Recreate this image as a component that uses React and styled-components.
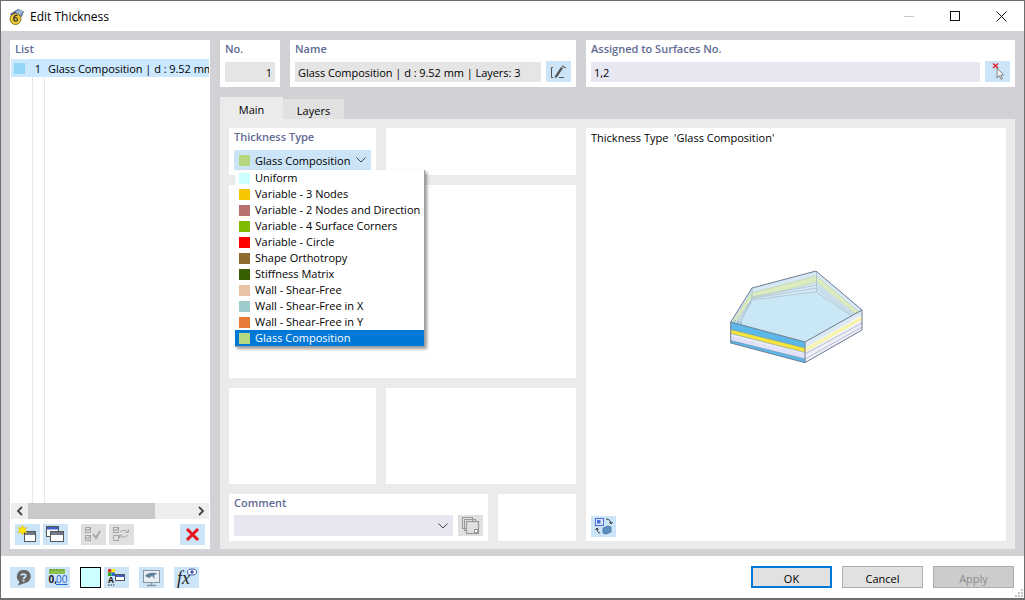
import styled, { createGlobalStyle } from "styled-components";

const GlobalStyle = createGlobalStyle`
  html, body { margin: 0; padding: 0; }
  body { font-family: "Open Sans", "Noto Sans", sans-serif; font-size: 11px; color: #000; }
`;

const thicknessTypes = [
  { name: "Uniform", color: "#ccffff" },
  { name: "Variable - 3 Nodes", color: "#f7c600" },
  { name: "Variable - 2 Nodes and Direction", color: "#b87070" },
  { name: "Variable - 4 Surface Corners", color: "#7fba00" },
  { name: "Variable - Circle", color: "#ff0000" },
  { name: "Shape Orthotropy", color: "#916a30" },
  { name: "Stiffness Matrix", color: "#385f00" },
  { name: "Wall - Shear-Free", color: "#e8c4a4" },
  { name: "Wall - Shear-Free in X", color: "#9ccccc" },
  { name: "Wall - Shear-Free in Y", color: "#e87a38" },
  { name: "Glass Composition", color: "#b5d77f", active: true },
];

export default function App() {
  return (
    <Window>
      <GlobalStyle />
      <TitleBar>
        <AppIcon />
        <TitleText>Edit Thickness</TitleText>
        <WindowControls>
          <WindowButton $disabled><svg width="11" height="11"><path d="M0 5.500h10" stroke="#bbb" /></svg></WindowButton>
          <WindowButton><svg width="11" height="11"><rect x=".5" y=".5" width="9" height="9" fill="none" stroke="#111" /></svg></WindowButton>
          <WindowButton><svg width="11" height="11"><path d="M.5.500l10 10M10.500.5l-10 10" stroke="#111" /></svg></WindowButton>
        </WindowControls>
      </TitleBar>

      <Body>
        <ListPanel>
          <PanelLabel>List</PanelLabel>
          <ListArea>
            <ListRow>
              <Swatch $color="#92d6f7" />
              <RowNumber>1</RowNumber>
              <RowText>Glass Composition | d : 9.52 mm</RowText>
            </ListRow>
          </ListArea>
          <ScrollBar>
            <ScrollArrow>
              <svg width="8" height="10"><path d="M6 1L2 5l4 4" fill="none" stroke="#444" strokeWidth="1.8" /></svg>
            </ScrollArrow>
            <ScrollTrack><ScrollThumb /></ScrollTrack>
            <ScrollArrow>
              <svg width="8" height="10"><path d="M2 1l4 4-4 4" fill="none" stroke="#444" strokeWidth="1.8" /></svg>
            </ScrollArrow>
          </ScrollBar>
          <ListTools>
            <IconButton><NewIcon /></IconButton>
            <IconButton><CopyWindowIcon /></IconButton>
            <ToolGap />
            <IconButton $disabled><CheckAllIcon /></IconButton>
            <IconButton $disabled><CheckSwapIcon /></IconButton>
            <ToolSpring />
            <IconButton><DeleteIcon /></IconButton>
          </ListTools>
        </ListPanel>

        <Content>
          <TopRow>
            <NoPanel>
              <PanelLabel>No.</PanelLabel>
              <FieldRow><Field $right>1</Field></FieldRow>
            </NoPanel>
            <NamePanel>
              <PanelLabel>Name</PanelLabel>
              <FieldRow>
                <Field>Glass Composition | d : 9.52 mm | Layers: 3</Field>
                <IconButton><EditIcon /></IconButton>
              </FieldRow>
            </NamePanel>
            <AssignedPanel>
              <PanelLabel>Assigned to Surfaces No.</PanelLabel>
              <FieldRow>
                <Field $blue>1,2</Field>
                <IconButton><PickIcon /></IconButton>
              </FieldRow>
            </AssignedPanel>
          </TopRow>

          <Tabs>
            <Tab $active>Main</Tab>
            <Tab>Layers</Tab>
          </Tabs>

          <TabPage>
            <LeftColumn>
              <SplitRow $height={47}>
                <TypePanel $width={147}>
                  <PanelLabel>Thickness Type</PanelLabel>
                  <TypeCombo>
                    <Swatch $color="#b5d77f" />
                    <ComboText>Glass Composition</ComboText>
                    <Chevron />
                  </TypeCombo>
                  <DropList>
                    {thicknessTypes.map(type => (
                      <DropItem key={type.name} $active={type.active}>
                        <Swatch $color={type.color} />
                        <span>{type.name}</span>
                      </DropItem>
                    ))}
                  </DropList>
                </TypePanel>
                <Card />
              </SplitRow>
              <SplitRow $height={193}><Card /></SplitRow>
              <SplitRow $height={96}>
                <Card $width={147} />
                <Card />
              </SplitRow>
              <SplitRow $height={47}>
                <CommentPanel>
                  <PanelLabel>Comment</PanelLabel>
                  <FieldRow>
                    <CommentCombo><Chevron /></CommentCombo>
                    <IconButton $disabled><CommentCopyIcon /></IconButton>
                  </FieldRow>
                </CommentPanel>
                <Card />
              </SplitRow>
            </LeftColumn>

            <PreviewPanel>
              <PreviewTitle>Thickness Type&nbsp; 'Glass Composition'</PreviewTitle>
              <PreviewArea><GlassDrawing /></PreviewArea>
              <PreviewTools>
                <IconButton><RotateViewIcon /></IconButton>
              </PreviewTools>
            </PreviewPanel>
          </TabPage>
        </Content>
      </Body>

      <Footer>
        <FooterTools>
          <IconButton><HelpIcon /></IconButton>
          <IconButton><UnitsIcon /></IconButton>
          <ColorChip />
          <IconButton><ColorTextIcon /></IconButton>
          <IconButton><MonitorIcon /></IconButton>
          <IconButton><FormulaIcon /></IconButton>
        </FooterTools>
        <DialogButtons>
          <DialogButton $primary>OK</DialogButton>
          <DialogButton>Cancel</DialogButton>
          <DialogButton $disabled>Apply</DialogButton>
        </DialogButtons>
        <Grip>
          <svg width="10" height="10">
            <path d="M7 1h2v2H7zM4 4h2v2H4zM7 4h2v2H7zM1 7h2v2H1zM4 7h2v2H4zM7 7h2v2H7z" fill="#c4c4c4" />
          </svg>
        </Grip>
      </Footer>
    </Window>
  );
}

function AppIcon() {
  return (
    <svg width="16" height="17" viewBox="0 0 16 17" style={{ marginRight: 5 }}>
      <path d="M1 6l8-5 6 2.500-2.500 5.500-7 3z" fill="#56698a" />
      <path d="M7 3l5-1.500 2 2-2.500 4-3.500 1z" fill="#9db6d6" />
      <ellipse cx="6.500" cy="11" rx="5.500" ry="5.500" fill="#efc92d" stroke="#6b5a20" strokeWidth=".8" />
      <path d="M8.500 7.500c-2.500-.8-3.800 1-3.800 3.600s3.800 2.600 3.800.3-3-1.800-3.400-.8" fill="none" stroke="#333" strokeWidth="1.200" />
    </svg>
  );
}

function NewIcon() {
  return (
    <svg width="25" height="21">
      <rect x="9.500" y="7.500" width="11" height="10" fill="#fff" stroke="#555" />
      <rect x="10" y="8" width="10" height="3" fill="#6f7a86" />
      <path d="M7.500 1l1.300 3.200 3.200-.9-1.800 2.900 1.800 2.700-3.200-.7L7.500 11 6.200 8.200 3 8.900l1.800-2.700L3 3.300l3.200.9z" fill="#ffe900" stroke="#d4b800" strokeWidth=".5" />
    </svg>
  );
}

function CopyWindowIcon() {
  return (
    <svg width="25" height="21">
      <rect x="3.500" y="2.500" width="12" height="10" fill="#fff" stroke="#555" />
      <rect x="4" y="3" width="11" height="2.500" fill="#3f5fc4" />
      <rect x="7.500" y="7.500" width="13" height="10" fill="#fff" stroke="#555" />
      <rect x="8" y="8" width="12" height="3" fill="#6f7a86" />
    </svg>
  );
}

function CheckAllIcon() {
  return (
    <svg width="25" height="21" fill="none" stroke="#a8a8a8">
      <rect x="4.500" y="3.500" width="5" height="5" />
      <rect x="4.500" y="11.500" width="5" height="5" />
      <path d="M5 5l2 2 3-4M5 13l2 2 3-4" stroke="#999" />
      <path d="M12 10l3 4 4-7" strokeWidth="2" />
    </svg>
  );
}

function CheckSwapIcon() {
  return (
    <svg width="25" height="21" fill="none" stroke="#a8a8a8">
      <rect x="4.500" y="3.500" width="5" height="5" />
      <rect x="4.500" y="11.500" width="5" height="5" />
      <path d="M5 5l2 2 3-4" stroke="#999" />
      <path d="M11 8c2-2 6-2 8-.5M19 11c-2 2.500-6 2.500-8 1" />
      <path d="M19.500 5.500v3h-3M10.500 14v-3h3" />
    </svg>
  );
}

function DeleteIcon() {
  return (
    <svg width="25" height="21">
      <path d="M7 5l11 11M18 5L7 16" stroke="#e8141c" strokeWidth="3" />
    </svg>
  );
}

function EditIcon() {
  return (
    <svg width="25" height="21" fill="none">
      <path d="M7 6.500H5.500v10H7" stroke="#555" />
      <path d="M9 15l6-9 2 1.200-6 9-2.500.8z" fill="#555" />
      <path d="M15.500 5.500l1-1.500 2 1.200-1 1.500" fill="#777" />
      <path d="M13 16.500h5M18 6.500h2" stroke="#555" />
    </svg>
  );
}

function PickIcon() {
  return (
    <svg width="25" height="21">
      <path d="M12 7v10l2.300-2.300 1.800 3.600 1.400-.7-1.800-3.500h3.100z" fill="#f4f6f8" stroke="#808080" />
      <path d="M8 2.500l5 4.500M13 2.500L8 7" stroke="#e02030" strokeWidth="1.500" />
    </svg>
  );
}

function CommentCopyIcon() {
  return (
    <svg width="25" height="21" fill="none" stroke="#999">
      <rect x="4.500" y="2.500" width="10" height="11" />
      <rect x="6.500" y="4.500" width="11" height="11" />
      <rect x="8.500" y="6.500" width="12" height="12" fill="#e0e0e0" strokeWidth="1.200" />
      <rect x="16.500" y="14.500" width="3" height="3" fill="#fff" />
    </svg>
  );
}

function RotateViewIcon() {
  return (
    <svg width="25" height="21" fill="none">
      <rect x="4.500" y="2.500" width="8" height="7" fill="#dfe8fb" stroke="#4a6fe0" />
      <rect x="6" y="4" width="3.500" height="3.500" fill="#4a6fe0" />
      <path d="M12 12l5-2 3 1v5l-5 2-3-1z" fill="#5a8fc0" stroke="#45709a" strokeWidth=".8" />
      <path d="M15 3c3 0 5 2 5 5M18.500 6l1.500 2 1.500-2M9 17c-2 0-3-2-3-5M4.500 14L6 12l1.500 2" stroke="#333" />
    </svg>
  );
}

function HelpIcon() {
  return (
    <svg width="25" height="21">
      <path d="M13.500 3a6.500 6.500 0 0 1 1.500 13L8 18.500l1.500-3.800A6.500 6.500 0 0 1 13.500 3z" fill="#666" />
      <path d="M11 8.500c.5-2 4.800-2 4.800.3 0 1.700-2.300 1.500-2.300 3.200" fill="none" stroke="#cce4f7" strokeWidth="1.800" />
      <rect x="12.500" y="12.800" width="2" height="1.800" fill="#cce4f7" />
    </svg>
  );
}

function UnitsIcon() {
  return (
    <svg width="25" height="21">
      <rect x="4" y="2" width="16" height="5" fill="#8cc04c" />
      <path d="M6 2v2M9 2v2M12 2v2M15 2v2M18 2v2" stroke="#5e8a2c" />
      <text x="3.500" y="16" fontFamily="Open Sans" fontWeight="700" fontSize="10" fill="#222">0,</text>
      <text x="11" y="16" fontFamily="Open Sans" fontSize="10" fill="#2a62d8" textDecoration="underline">00</text>
    </svg>
  );
}

function ColorTextIcon() {
  return (
    <svg width="25" height="21">
      <rect x="4" y="2" width="3.500" height="3.500" fill="#d33" />
      <rect x="7.500" y="2" width="3.500" height="3.500" fill="#ee0" />
      <rect x="4" y="5.500" width="3.500" height="3.500" fill="#2a2" />
      <rect x="7.500" y="5.500" width="3.500" height="3.500" fill="#36c" />
      <text x="4" y="16" fontFamily="Open Sans" fontWeight="700" fontSize="8.500" fill="#222">A</text>
      <path d="M4 18h1.500M6.500 18H8M9 18h1.500" stroke="#333" />
      <rect x="11.500" y="7.500" width="9" height="6" fill="#fff" stroke="#555" />
      <rect x="12" y="8" width="8" height="2" fill="#3f5fc4" />
    </svg>
  );
}

function MonitorIcon() {
  return (
    <svg width="25" height="21">
      <rect x="4.500" y="3.500" width="16" height="12" fill="#e8eef4" stroke="#8b95a0" />
      <path d="M6 9c3-4 9-4 13-2-2 0-3 .5-4 1.500l1 3.500-3-3-3 2z" fill="#5f7f9c" />
      <path d="M12.500 16v2M8 18.500h9" stroke="#8b95a0" strokeWidth="1.500" />
    </svg>
  );
}

function FormulaIcon() {
  return (
    <svg width="25" height="21">
      <text x="3" y="17" fontFamily="Liberation Serif" fontStyle="italic" fontSize="18" fill="#222">fx</text>
      <ellipse cx="18" cy="5" rx="4.500" ry="3" fill="#fff" stroke="#4a5fb0" />
      <circle cx="18" cy="5" r="1.700" fill="#3a4fa8" />
    </svg>
  );
}

function Chevron() {
  return (
    <ChevronBox>
      <svg width="10" height="6"><path d="M.5.500L5 5 9.500.5" fill="none" stroke="#444" /></svg>
    </ChevronBox>
  );
}

function GlassDrawing() {
  const stroke = "#6d7c92";
  return (
    <svg width="160" height="110" viewBox="0 0 160 110">
      <path d="M15.700 62L37 28 101 11 147 50 90 82z" fill="#c9e7f5" />
      <path d="M37 28l64-17 46 39-9 7-36.500-25.300L36.500 40 25 63l-9.300-1z" fill="#d6e9f3" />
      <path d="M36.500 33l65-17 42 36-2.500 2-39.500-32-64.500 16.500L18 65l-1.500-1.500z" fill="#dcebc0" stroke="#b9d0a8" strokeWidth=".6" />
      <path d="M36.500 37l65-12 39 31M36.500 38.500l65-10.500 37.500 29M36.500 40l65-8.300L138 57M21 64l15.500-24M23 64l13.500-22M25 63.500L36.500 40" fill="none" stroke="#a3bbce" strokeWidth=".7" />
      <path d="M37 28v12M101.500 11v21" stroke="#a3bbce" strokeWidth=".8" />
      <path d="M18 63l3-3M21 64l3-3M24 65l3-3" stroke="#4fa8c8" strokeWidth=".8" />
      <path d="M137 57l4-3M140 58l4-3M143 56l3-2" stroke="#9aa8b4" strokeWidth=".7" />

      <path d="M15.700 62L90 82v6L15.700 69.500z" fill="#5cb8e8" />
      <path d="M15.700 69.500L90 88v4.500L15.700 73.500z" fill="#f5e63c" />
      <path d="M15.700 73.500L90 92.500v1.500L15.700 75.500z" fill="#eef0f5" />
      <path d="M15.700 75.500L90 94v5L15.700 80.500z" fill="#e0e0f8" />
      <path d="M15.700 80.500L90 99v3.700L15.700 83z" fill="#5cb8e8" />
      <path d="M90 82l57-32v5L90 88z" fill="#dbeaf4" />
      <path d="M90 88l57-32v4L90 92.500z" fill="#f8f4b0" />
      <path d="M90 92.500l57-32v9.500L90 102.700z" fill="#edeef8" />
      <path d="M90 94l57-31M90 99l57-32" stroke="#a3adc0" strokeWidth=".7" />
      <path d="M15.700 69.500L90 88M15.700 73.500L90 92.500M15.700 80.500L90 99" stroke="#5d7a94" strokeWidth=".5" />

      <path d="M15.700 62L37 28 101 11 147 50 90 82zM15.700 62v21L90 102.700V82M147 50v20L90 102.700" fill="none" stroke={stroke} strokeWidth="1" strokeLinejoin="round" />
    </svg>
  );
}

const Window = styled.div`
  width: 1025px;
  height: 600px;
  box-sizing: border-box;
  border: 1px solid #6e6e6e;
  border-bottom-width: 2px;
  background: #fff;
  display: flex;
  flex-direction: column;
  overflow: hidden;
`;

const TitleBar = styled.header`
  height: 30px;
  flex: none;
  display: flex;
  align-items: center;
  padding-left: 8px;
  font-size: 12px;
`;

const TitleText = styled.span`
  font-size: 12px;
`;

const WindowControls = styled.div`
  margin-left: auto;
  display: flex;
`;

const WindowButton = styled.div`
  width: 46px;
  height: 30px;
  display: flex;
  align-items: center;
  justify-content: center;
  opacity: ${p => (p.$disabled ? 0.8 : 1)};
`;

const Body = styled.main`
  flex: 1;
  display: flex;
  gap: 10px;
  padding: 9px 9px 7px;
  background: #d1d1d6;
`;

const Panel = styled.section`
  background: #fff;
  box-sizing: border-box;
`;

const ListPanel = styled(Panel)`
  width: 200px;
  flex: none;
  display: flex;
  flex-direction: column;
`;

const PanelLabel = styled.div`
  height: 18px;
  line-height: 18px;
  padding-left: 5px;
  font-weight: 600;
  font-size: 11px;
  color: #5f6b94;
  white-space: nowrap;
`;

const ListArea = styled.div`
  flex: 1;
  margin: 1px 1px 0;
  min-height: 0;
  background:
    linear-gradient(#e8e8e8, #e8e8e8) 21px 0 / 1px 100% no-repeat,
    linear-gradient(#e8e8e8, #e8e8e8) 33px 0 / 1px 100% no-repeat;
`;

const ListRow = styled.div`
  height: 18px;
  background: #cce8ff;
  display: flex;
  align-items: center;
  padding-left: 3px;
  overflow: hidden;
  white-space: nowrap;
`;

const Swatch = styled.i`
  width: 11px;
  height: 11px;
  flex: none;
  background: ${p => p.$color};
`;

const RowNumber = styled.span`
  width: 16px;
  flex: none;
  text-align: right;
`;

const RowText = styled.span`
  margin-left: 7px;
  letter-spacing: -0.05px;
`;

const ScrollBar = styled.div`
  height: 16px;
  margin: 0 1px;
  display: flex;
  flex: none;
  background: #eeeeee;
`;

const ScrollArrow = styled.div`
  width: 17px;
  flex: none;
  display: flex;
  align-items: center;
  justify-content: center;
`;

const ScrollTrack = styled.div`
  flex: 1;
`;

const ScrollThumb = styled.div`
  width: 127px;
  height: 100%;
  background: #c9c9c9;
`;

const ListTools = styled.div`
  display: flex;
  gap: 3px;
  height: 21px;
  flex: none;
  padding: 5px 5px 4px;
`;

const ToolGap = styled.div`
  width: 7px;
`;

const ToolSpring = styled.div`
  flex: 1;
`;

const IconButton = styled.button`
  width: 25px;
  height: 21px;
  flex: none;
  padding: 0;
  border: 0;
  display: block;
  background: ${p => (p.$disabled ? "#e0e0e0" : "#cce4f7")};
  svg { display: block; }
`;

const Content = styled.div`
  flex: 1;
  min-width: 0;
  display: flex;
  flex-direction: column;
`;

const TopRow = styled.div`
  display: flex;
  gap: 10px;
  height: 47px;
  flex: none;
`;

const NoPanel = styled(Panel)`
  width: 60px;
`;

const NamePanel = styled(Panel)`
  width: 286px;
`;

const AssignedPanel = styled(Panel)`
  flex: 1;
`;

const FieldRow = styled.div`
  display: flex;
  gap: 5px;
  padding: 3px 5px 0;
  align-items: flex-start;
`;

const Field = styled.div`
  flex: 1;
  height: 20px;
  margin-top: 1px;
  line-height: 22px;
  padding: 0 3px;
  letter-spacing: -0.05px;
  text-align: ${p => (p.$right ? "right" : "left")};
  background: ${p => (p.$blue ? "#e6e7f1" : "#e5e5e5")};
  white-space: nowrap;
  overflow: hidden;
`;

const Tabs = styled.nav`
  height: 22px;
  margin-top: 10px;
  flex: none;
  display: flex;
  align-items: flex-end;
`;

const Tab = styled.div`
  width: ${p => (p.$active ? 63 : 61)}px;
  height: ${p => (p.$active ? 22 : 20)}px;
  line-height: ${p => (p.$active ? 26 : 24)}px;
  text-align: center;
  background: ${p => (p.$active ? "#ebebeb" : "#e1e1e1")};
`;

const TabPage = styled.div`
  flex: 1;
  display: flex;
  gap: 10px;
  padding: 9px 9px 8px;
  background: #ebebeb;
`;

const LeftColumn = styled.div`
  width: 347px;
  flex: none;
  display: flex;
  flex-direction: column;
  gap: 10px;
`;

const SplitRow = styled.div`
  height: ${p => p.$height}px;
  display: flex;
  gap: 10px;
  flex: none;
`;

const Card = styled(Panel)`
  flex: ${p => (p.$width ? `0 0 ${p.$width}px` : 1)};
  min-width: 0;
`;

const TypePanel = styled(Card)`
  position: relative;
`;

const TypeCombo = styled.div`
  margin: 4px 5px 0;
  height: 20px;
  background: #cce4f7;
  display: flex;
  align-items: center;
  gap: 5px;
  padding-left: 5px;
  white-space: nowrap;
`;

const ComboText = styled.span`
  margin-right: -2px;
`;

const ChevronBox = styled.span`
  margin: 0 5px 0 auto;
  width: 10px;
  flex: none;
  display: flex;
  justify-content: center;
  svg { display: block; }
`;

const DropList = styled.ul`
  position: absolute;
  z-index: 5;
  left: 6px;
  top: 42px;
  width: 189px;
  margin: 0;
  padding: 0;
  list-style: none;
  background: #fff;
  border-right: 1px solid #a0a0a0;
  border-bottom: 1px solid #a0a0a0;
  box-shadow: 2px 2px 3px rgba(0, 0, 0, 0.4);
`;

const DropItem = styled.li`
  height: 16px;
  display: flex;
  align-items: center;
  gap: 5px;
  padding-left: 4px;
  white-space: nowrap;
  background: ${p => (p.$active ? "#0078d7" : "transparent")};
  color: ${p => (p.$active ? "#fff" : "#000")};
  span { margin-top: -2px; }
`;

const CommentPanel = styled(Card)`
  flex: 0 0 259px;
`;

const CommentCombo = styled.div`
  flex: 1;
  height: 21px;
  background: #e6e7f1;
  display: flex;
  align-items: center;
  justify-content: flex-end;
`;

const PreviewPanel = styled(Panel)`
  flex: 1;
  display: flex;
  flex-direction: column;
`;

const PreviewTitle = styled.div`
  padding: 1px 5px 0;
  height: 20px;
  line-height: 18px;
`;

const PreviewArea = styled.div`
  flex: 1;
  display: flex;
  align-items: center;
  justify-content: center;
  padding: 0 2px 36px 0;
`;

const PreviewTools = styled.div`
  padding: 0 5px 4px;
`;

const Footer = styled.footer`
  height: 42px;
  flex: none;
  position: relative;
  display: flex;
  align-items: center;
  justify-content: space-between;
  padding: 0 10px 0 9px;
  background: #fff;
`;

const FooterTools = styled.div`
  display: flex;
  gap: 10px;
`;

const ColorChip = styled.div`
  width: 21px;
  height: 21px;
  box-sizing: border-box;
  border: 1px solid #000;
  background: #ccffff;
  margin-right: -7px;
`;

const DialogButtons = styled.div`
  display: flex;
  gap: 10px;
`;

const DialogButton = styled.button`
  width: 81px;
  height: 22px;
  padding: 2px 0 0;
  box-sizing: border-box;
  font: inherit;
  color: ${p => (p.$disabled ? "#8c8c8c" : "#000")};
  background: ${p => (p.$disabled ? "#cccccc" : "#e1e1e1")};
  border: ${p => (p.$primary ? "2px solid #0078d7" : "1px solid #adadad")};
`;

const Grip = styled.div`
  position: absolute;
  right: 0;
  bottom: 0;
  width: 10px;
  height: 10px;
  svg { display: block; }
`;
